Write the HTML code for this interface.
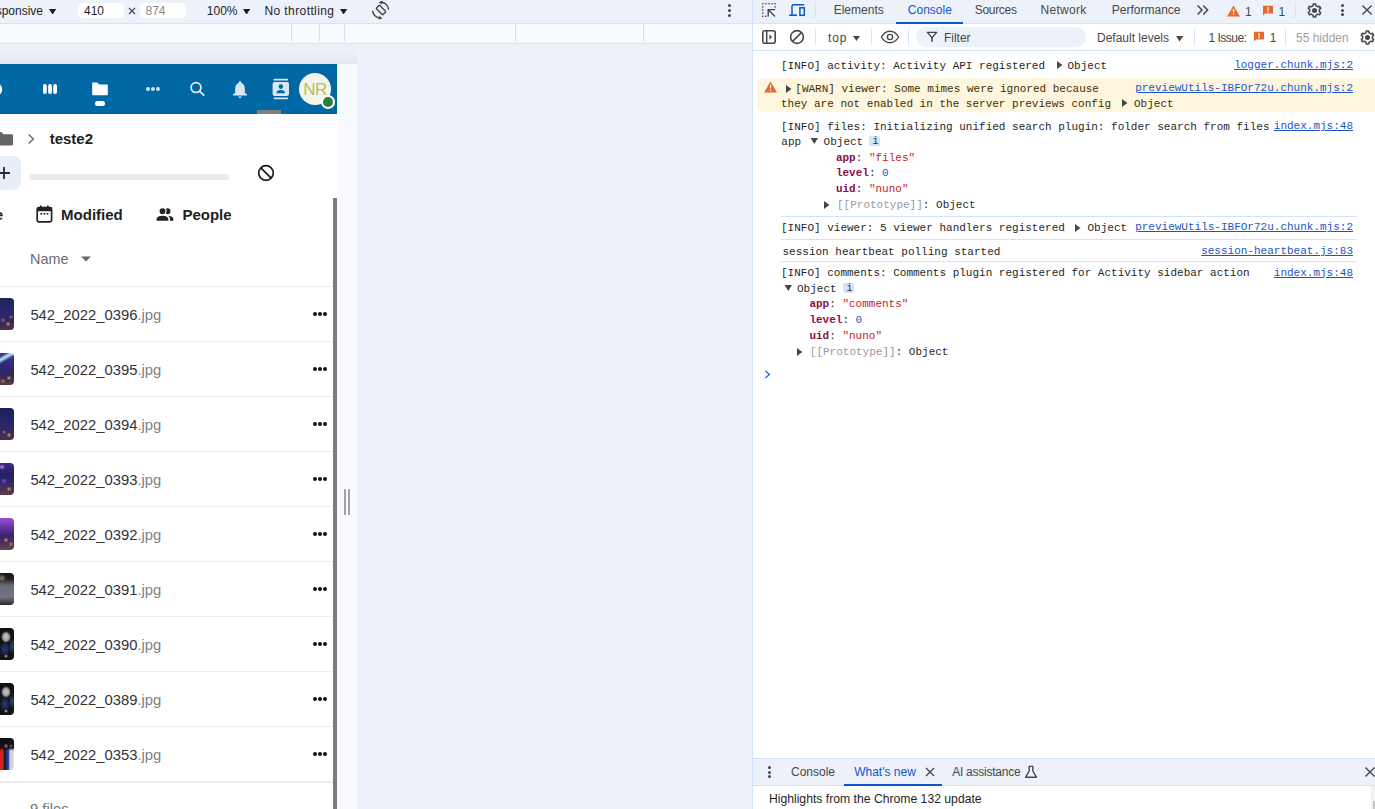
<!DOCTYPE html>
<html><head><meta charset="utf-8"><title>DevTools</title>
<style>
html,body{margin:0;padding:0;}
body{width:1375px;height:809px;overflow:hidden;position:relative;background:#edf2fa;font-family:'Liberation Sans', sans-serif;}
</style></head><body>
<div style="position:absolute;left:0px;top:0px;width:752px;height:23px;background:#edf2fa;"></div>
<div style="position:absolute;left:0px;top:23px;width:752px;height:1px;background:#d3e3fd;"></div>
<div style="position:absolute;left:0px;top:24px;width:752px;height:19px;background:#f8fafd;"></div>
<div style="position:absolute;left:291px;top:24px;width:1px;height:18px;background:#d3e3fd;"></div>
<div style="position:absolute;left:319px;top:24px;width:1px;height:18px;background:#d3e3fd;"></div>
<div style="position:absolute;left:344px;top:24px;width:1px;height:18px;background:#d3e3fd;"></div>
<div style="position:absolute;left:515px;top:24px;width:1px;height:18px;background:#d3e3fd;"></div>
<div style="position:absolute;left:643px;top:24px;width:1px;height:18px;background:#d3e3fd;"></div>
<div style="position:absolute;left:0px;top:43px;width:752px;height:1px;background:#d3e3fd;"></div>
<div style="position:absolute;right:1332px;top:3.84px;font:normal 12px/14px 'Liberation Sans', sans-serif;color:#1f1f1f;white-space:pre;">Responsive</div>
<svg style="position:absolute;left:49.2px;top:8.8px" width="7.2" height="5.6" viewBox="0 0 7.2 5.6"><path d="M0 0H7.2L3.6 5.6Z" fill="#1f1f1f"/></svg>
<div style="position:absolute;left:78px;top:3px;width:46px;height:15px;background:#fff;border-radius:4px"></div>
<div style="position:absolute;left:84px;top:3.84px;font:normal 12px/14px 'Liberation Sans', sans-serif;color:#1f1f1f;white-space:pre;">410</div>
<svg style="position:absolute;left:128px;top:7px" width="8" height="8" viewBox="0 0 8 8"><path d="M1 1L7 7M7 1L1 7" stroke="#474747" stroke-width="1.2"/></svg>
<div style="position:absolute;left:140px;top:3px;width:46px;height:15px;background:#fff;border-radius:4px"></div>
<div style="position:absolute;left:145.5px;top:3.84px;font:normal 12px/14px 'Liberation Sans', sans-serif;color:#8a8a8a;white-space:pre;">874</div>
<div style="position:absolute;left:206.8px;top:3.84px;font:normal 12px/14px 'Liberation Sans', sans-serif;color:#1f1f1f;white-space:pre;">100%</div>
<svg style="position:absolute;left:242.7px;top:8.8px" width="7.2" height="5.6" viewBox="0 0 7.2 5.6"><path d="M0 0H7.2L3.6 5.6Z" fill="#1f1f1f"/></svg>
<div style="position:absolute;left:264.5px;top:3.84px;font:normal 12px/14px 'Liberation Sans', sans-serif;color:#1f1f1f;white-space:pre;letter-spacing:0.4px">No throttling</div>
<svg style="position:absolute;left:340.4px;top:8.8px" width="7.2" height="5.6" viewBox="0 0 7.2 5.6"><path d="M0 0H7.2L3.6 5.6Z" fill="#1f1f1f"/></svg>
<svg style="position:absolute;left:366px;top:0px" width="30" height="22" viewBox="0 0 30 22"><g fill="none" stroke="#474747" stroke-width="1.4">
<rect x="12.6" y="5.3" width="4.8" height="9.4" rx="1" transform="rotate(-45 15 10)" />
<path d="M14.6 2.2 A8 8 0 0 1 22.6 9.6"/>
<path d="M6.6 10.6 A8 8 0 0 0 14.2 18.2"/>
</g>
<path d="M12.6 2.2 L16.6 0.6 L16 4.4Z" fill="#474747"/>
<path d="M16.6 18.4 L12.6 19.6 L13.2 15.8Z" fill="#474747"/></svg>
<div style="position:absolute;left:728.3px;top:3.5px;width:3px;height:3px;background:#474747;border-radius:50%"></div>
<div style="position:absolute;left:728.3px;top:8.5px;width:3px;height:3px;background:#474747;border-radius:50%"></div>
<div style="position:absolute;left:728.3px;top:13.5px;width:3px;height:3px;background:#474747;border-radius:50%"></div>
<div style="position:absolute;left:0px;top:44px;width:357px;height:20px;background:linear-gradient(180deg,rgba(20,30,70,0) 0%,rgba(20,30,70,0.045) 100%);border-radius:0 18px 0 0"></div>
<div style="position:absolute;left:0px;top:64px;width:337px;height:745px;background:#fff;"></div>
<div style="position:absolute;left:337px;top:64px;width:20px;height:745px;background:#f8fafd;"></div>
<div style="position:absolute;left:344px;top:489px;width:2px;height:26px;background:#a3a3a3;"></div>
<div style="position:absolute;left:348px;top:489px;width:2px;height:26px;background:#a3a3a3;"></div>
<div style="position:absolute;left:0px;top:64px;width:337px;height:50px;background:#0069a5;"></div>
<svg style="position:absolute;left:0px;top:82px" width="6" height="15" viewBox="0 0 6 15"><circle cx="-4.8" cy="7.4" r="7" fill="#fff"/></svg>
<svg style="position:absolute;left:42px;top:83px" width="16" height="12" viewBox="0 0 16 12"><rect x="1" y="1" width="3.8" height="10" rx="1.9" fill="#fff"/><rect x="6.1" y="1" width="3.8" height="10" rx="1.9" fill="#fff"/><rect x="11.2" y="1" width="3.8" height="10" rx="1.9" fill="#fff"/></svg>
<svg style="position:absolute;left:91px;top:82px" width="18" height="14" viewBox="0 0 18 14"><path d="M1.2 1.6c0-.6.4-1 1-1h4.2l1.8 2h7.6c.6 0 1 .4 1 1v8.6c0 .6-.4 1-1 1H2.2c-.6 0-1-.4-1-1z" fill="#fff"/></svg>
<div style="position:absolute;left:95px;top:101px;width:10px;height:5px;background:#fff;border-radius:2.5px"></div>
<div style="position:absolute;left:145.9px;top:87.2px;width:3.8px;height:3.8px;background:#cfe0ec;border-radius:50%"></div>
<div style="position:absolute;left:151.1px;top:87.2px;width:3.8px;height:3.8px;background:#cfe0ec;border-radius:50%"></div>
<div style="position:absolute;left:156.29999999999998px;top:87.2px;width:3.8px;height:3.8px;background:#cfe0ec;border-radius:50%"></div>
<svg style="position:absolute;left:189px;top:81px" width="17" height="16" viewBox="0 0 17 16"><circle cx="7" cy="6.6" r="4.9" fill="none" stroke="#e8f0f6" stroke-width="1.7"/><path d="M10.5 10.2 L15.2 14.6" stroke="#e8f0f6" stroke-width="1.8"/></svg>
<svg style="position:absolute;left:231px;top:80px" width="18" height="19" viewBox="0 0 18 19"><path d="M9 1.2c-.8 0-1.3.6-1.3 1.2v.5C5.5 3.6 4.2 5.6 4.2 8v4.8L2 14.6v.9h14v-.9l-2.2-1.8V8c0-2.4-1.3-4.4-3.5-5.1v-.5c0-.6-.5-1.2-1.3-1.2z" fill="#d9e7f1"/><path d="M7.4 16.4h3.2c0 .9-.7 1.5-1.6 1.5s-1.6-.6-1.6-1.5z" fill="#d9e7f1"/></svg>
<svg style="position:absolute;left:271px;top:78px" width="20" height="22" viewBox="0 0 20 22"><rect x="2.6" y="0.8" width="14.4" height="1.8" rx=".6" fill="#d9e7f1"/><rect x="2.6" y="19.4" width="14.4" height="1.8" rx=".6" fill="#d9e7f1"/><rect x="1.6" y="4" width="16.4" height="14" rx="2" fill="#d9e7f1"/><circle cx="9.8" cy="8.6" r="2.3" fill="#0069a5"/><path d="M5.4 15.2c0-2 2-3.2 4.4-3.2s4.4 1.2 4.4 3.2z" fill="#0069a5"/></svg>
<div style="position:absolute;left:299px;top:73px;width:32px;height:32px;background:#f4f5e9;border-radius:50%"></div>
<div style="position:absolute;left:299px;top:80.11px;font:normal 17px/20px 'Liberation Sans', sans-serif;color:#b7bf63;white-space:pre;width:32px;text-align:center;letter-spacing:-0.5px">NR</div>
<div style="position:absolute;left:321px;top:95px;width:14px;height:14px;background:#fff;border-radius:50%"></div>
<div style="position:absolute;left:323px;top:97px;width:10px;height:10px;background:#2d7d3a;border-radius:50%"></div>
<div style="position:absolute;left:257px;top:110px;width:24px;height:4px;background:#7f7f7f;"></div>
<svg style="position:absolute;left:-6px;top:131px" width="20" height="15" viewBox="0 0 20 15"><path d="M0 2.4c0-.8.6-1.4 1.4-1.4h6l2 2.2h8.2c.8 0 1.4.6 1.4 1.4v8.4c0 .8-.6 1.4-1.4 1.4H1.4C.6 14.4 0 13.8 0 13z" fill="#646464"/></svg>
<svg style="position:absolute;left:27px;top:133px" width="9" height="12" viewBox="0 0 9 12"><path d="M1.6 1.4 L6.4 6 L1.6 10.6" fill="none" stroke="#6a6a6a" stroke-width="1.4"/></svg>
<div style="position:absolute;left:49.7px;top:129.80px;font:bold 15px/18px 'Liberation Sans', sans-serif;color:#222;white-space:pre;">teste2</div>
<div style="position:absolute;left:-20px;top:156px;width:41px;height:34px;background:#e7eef5;border-radius:8px"></div>
<svg style="position:absolute;left:-2px;top:166px" width="14" height="14" viewBox="0 0 14 14"><path d="M6 1V13M0 7H12" stroke="#1c2f3e" stroke-width="1.8"/></svg>
<div style="position:absolute;left:29px;top:174px;width:200px;height:6px;background:#ebebeb;border-radius:3px"></div>
<svg style="position:absolute;left:257px;top:164px" width="18" height="18" viewBox="0 0 18 18"><circle cx="9" cy="9" r="7.3" fill="none" stroke="#1b1b1b" stroke-width="1.7"/><path d="M3.8 3.8 L14.2 14.2" stroke="#1b1b1b" stroke-width="1.7"/></svg>
<div style="position:absolute;right:1372px;top:206.10px;font:bold 15px/18px 'Liberation Sans', sans-serif;color:#222;white-space:pre;">Type</div>
<svg style="position:absolute;left:36px;top:205px" width="17" height="18" viewBox="0 0 17 18"><rect x="1.2" y="2.6" width="14.4" height="14.2" rx="1.6" fill="none" stroke="#222" stroke-width="1.7"/><rect x="4" y="0.6" width="1.7" height="3" fill="#222"/><rect x="11" y="0.6" width="1.7" height="3" fill="#222"/><rect x="1.2" y="2.6" width="14.4" height="3.6" fill="#222"/><rect x="4.4" y="8" width="1.8" height="1.6" fill="#222"/><rect x="7.5" y="8" width="1.8" height="1.6" fill="#222"/><rect x="10.6" y="8" width="1.8" height="1.6" fill="#222"/></svg>
<div style="position:absolute;left:61.1px;top:206.10px;font:bold 15px/18px 'Liberation Sans', sans-serif;color:#222;white-space:pre;">Modified</div>
<svg style="position:absolute;left:154.9px;top:204.8px" width="20.04" height="20.04" viewBox="0 0 24 24"><path d="M16 17V19H2V17S2 13 9 13 16 17 16 17M12.5 7.5A3.5 3.5 0 1 0 9 11A3.5 3.5 0 0 0 12.5 7.5M15.94 13A5.32 5.32 0 0 1 18 17V19H22V17S22 13.37 15.94 13M15 4A3.39 3.39 0 0 0 13.07 4.59A5 5 0 0 1 13.07 10.41A3.39 3.39 0 0 0 15 11A3.5 3.5 0 0 0 15 4Z" fill="#222"/></svg>
<div style="position:absolute;left:182.4px;top:206.10px;font:bold 15px/18px 'Liberation Sans', sans-serif;color:#222;white-space:pre;">People</div>
<div style="position:absolute;left:30px;top:250.51px;font:normal 14.4px/17px 'Liberation Sans', sans-serif;color:#6b6b6b;white-space:pre;">Name</div>
<svg style="position:absolute;left:81px;top:256px" width="10" height="6" viewBox="0 0 10 6"><path d="M0 0.4H10L5 5.6Z" fill="#6b6b6b"/></svg>
<div style="position:absolute;left:0px;top:286px;width:333px;height:1px;background:#ededed;"></div>
<div style="position:absolute;left:0px;top:298px;width:14px;height:32px;background:radial-gradient(circle at 8px 26px,#e0a040 0,transparent 2.5px),radial-gradient(circle at 3px 22px,#9a60c0 0,transparent 2.5px),radial-gradient(circle at 11px 19px,#c08050 0,transparent 2px),linear-gradient(180deg,#22225a 0%,#2a2670 45%,#34285e 70%,#4a3048 100%);border-radius:0 4px 4px 0"></div>
<div style="position:absolute;left:30.4px;top:305.87px;font:normal 14.8px/18px 'Liberation Sans', sans-serif;color:#333;white-space:pre;">542_2022_0396<span style="color:#808080">.jpg</span></div>
<div style="position:absolute;left:313px;top:312px;width:4px;height:4px;background:#111;border-radius:50%"></div>
<div style="position:absolute;left:318px;top:312px;width:4px;height:4px;background:#111;border-radius:50%"></div>
<div style="position:absolute;left:323px;top:312px;width:4px;height:4px;background:#111;border-radius:50%"></div>
<div style="position:absolute;left:0px;top:341px;width:333px;height:1px;background:#ededed;"></div>
<div style="position:absolute;left:0px;top:353px;width:14px;height:32px;background:linear-gradient(150deg,transparent 8%,#b8f0ff 18%,transparent 28%),radial-gradient(circle at 9px 25px,#e0a040 0,transparent 2.5px),radial-gradient(circle at 3px 28px,#c07040 0,transparent 2.5px),linear-gradient(180deg,#3a3498 0%,#2e2878 40%,#30265e 70%,#5a3e44 100%);border-radius:0 4px 4px 0"></div>
<div style="position:absolute;left:30.4px;top:360.87px;font:normal 14.8px/18px 'Liberation Sans', sans-serif;color:#333;white-space:pre;">542_2022_0395<span style="color:#808080">.jpg</span></div>
<div style="position:absolute;left:313px;top:367px;width:4px;height:4px;background:#111;border-radius:50%"></div>
<div style="position:absolute;left:318px;top:367px;width:4px;height:4px;background:#111;border-radius:50%"></div>
<div style="position:absolute;left:323px;top:367px;width:4px;height:4px;background:#111;border-radius:50%"></div>
<div style="position:absolute;left:0px;top:396px;width:333px;height:1px;background:#ededed;"></div>
<div style="position:absolute;left:0px;top:408px;width:14px;height:32px;background:radial-gradient(circle at 9px 27px,#e0a040 0,transparent 2.5px),radial-gradient(circle at 4px 24px,#a070c0 0,transparent 2px),linear-gradient(180deg,#1e1e55 0%,#28266a 45%,#34285e 70%,#4a3048 100%);border-radius:0 4px 4px 0"></div>
<div style="position:absolute;left:30.4px;top:415.87px;font:normal 14.8px/18px 'Liberation Sans', sans-serif;color:#333;white-space:pre;">542_2022_0394<span style="color:#808080">.jpg</span></div>
<div style="position:absolute;left:313px;top:422px;width:4px;height:4px;background:#111;border-radius:50%"></div>
<div style="position:absolute;left:318px;top:422px;width:4px;height:4px;background:#111;border-radius:50%"></div>
<div style="position:absolute;left:323px;top:422px;width:4px;height:4px;background:#111;border-radius:50%"></div>
<div style="position:absolute;left:0px;top:451px;width:333px;height:1px;background:#ededed;"></div>
<div style="position:absolute;left:0px;top:463px;width:14px;height:32px;background:radial-gradient(circle at 2px 4px,#d080ff 0,transparent 3px),radial-gradient(circle at 9px 26px,#e0a040 0,transparent 2.5px),radial-gradient(circle at 4px 18px,#8050d0 0,transparent 3px),linear-gradient(180deg,#3a2a88 0%,#22205e 35%,#30246e 60%,#5a3e48 100%);border-radius:0 4px 4px 0"></div>
<div style="position:absolute;left:30.4px;top:470.87px;font:normal 14.8px/18px 'Liberation Sans', sans-serif;color:#333;white-space:pre;">542_2022_0393<span style="color:#808080">.jpg</span></div>
<div style="position:absolute;left:313px;top:477px;width:4px;height:4px;background:#111;border-radius:50%"></div>
<div style="position:absolute;left:318px;top:477px;width:4px;height:4px;background:#111;border-radius:50%"></div>
<div style="position:absolute;left:323px;top:477px;width:4px;height:4px;background:#111;border-radius:50%"></div>
<div style="position:absolute;left:0px;top:506px;width:333px;height:1px;background:#ededed;"></div>
<div style="position:absolute;left:0px;top:518px;width:14px;height:32px;background:radial-gradient(circle at 6px 22px,#e0a040 0,transparent 2.5px),radial-gradient(circle at 11px 26px,#c08040 0,transparent 2.5px),linear-gradient(180deg,#9a50d0 0%,#6a3aa8 25%,#3a2470 55%,#4a3060 80%,#6a4a40 100%);border-radius:0 4px 4px 0"></div>
<div style="position:absolute;left:30.4px;top:525.87px;font:normal 14.8px/18px 'Liberation Sans', sans-serif;color:#333;white-space:pre;">542_2022_0392<span style="color:#808080">.jpg</span></div>
<div style="position:absolute;left:313px;top:532px;width:4px;height:4px;background:#111;border-radius:50%"></div>
<div style="position:absolute;left:318px;top:532px;width:4px;height:4px;background:#111;border-radius:50%"></div>
<div style="position:absolute;left:323px;top:532px;width:4px;height:4px;background:#111;border-radius:50%"></div>
<div style="position:absolute;left:0px;top:561px;width:333px;height:1px;background:#ededed;"></div>
<div style="position:absolute;left:0px;top:573px;width:14px;height:32px;background:radial-gradient(circle at 2px 5px,#9a8070 0,transparent 4px),linear-gradient(180deg,#18181c 0%,#202024 18%,#6a6a78 38%,#747482 75%,#2a2a30 100%);border-radius:0 4px 4px 0"></div>
<div style="position:absolute;left:30.4px;top:580.87px;font:normal 14.8px/18px 'Liberation Sans', sans-serif;color:#333;white-space:pre;">542_2022_0391<span style="color:#808080">.jpg</span></div>
<div style="position:absolute;left:313px;top:587px;width:4px;height:4px;background:#111;border-radius:50%"></div>
<div style="position:absolute;left:318px;top:587px;width:4px;height:4px;background:#111;border-radius:50%"></div>
<div style="position:absolute;left:323px;top:587px;width:4px;height:4px;background:#111;border-radius:50%"></div>
<div style="position:absolute;left:0px;top:616px;width:333px;height:1px;background:#ededed;"></div>
<div style="position:absolute;left:0px;top:628px;width:14px;height:32px;background:radial-gradient(ellipse 5px 6px at 6px 9px,#c8c8c8 0,#a0a0a0 60%,transparent 100%),radial-gradient(ellipse 5px 7px at 5px 21px,#2a3a68 0,#1a2448 70%,transparent 100%),radial-gradient(circle at 6px 28px,#d0d0d0 0,transparent 2px),radial-gradient(ellipse 3px 8px at 12px 18px,#3a4a80 0,transparent 100%),linear-gradient(180deg,#101014 0%,#141418 100%);border-radius:0 4px 4px 0"></div>
<div style="position:absolute;left:30.4px;top:635.87px;font:normal 14.8px/18px 'Liberation Sans', sans-serif;color:#333;white-space:pre;">542_2022_0390<span style="color:#808080">.jpg</span></div>
<div style="position:absolute;left:313px;top:642px;width:4px;height:4px;background:#111;border-radius:50%"></div>
<div style="position:absolute;left:318px;top:642px;width:4px;height:4px;background:#111;border-radius:50%"></div>
<div style="position:absolute;left:323px;top:642px;width:4px;height:4px;background:#111;border-radius:50%"></div>
<div style="position:absolute;left:0px;top:671px;width:333px;height:1px;background:#ededed;"></div>
<div style="position:absolute;left:0px;top:683px;width:14px;height:32px;background:radial-gradient(ellipse 5px 6px at 6px 9px,#c8c8c8 0,#a0a0a0 60%,transparent 100%),radial-gradient(ellipse 5px 7px at 5px 21px,#2a3a68 0,#1a2448 70%,transparent 100%),radial-gradient(circle at 6px 28px,#d0d0d0 0,transparent 2px),radial-gradient(ellipse 3px 8px at 12px 18px,#3a4a80 0,transparent 100%),linear-gradient(180deg,#101014 0%,#141418 100%);border-radius:0 4px 4px 0"></div>
<div style="position:absolute;left:30.4px;top:690.87px;font:normal 14.8px/18px 'Liberation Sans', sans-serif;color:#333;white-space:pre;">542_2022_0389<span style="color:#808080">.jpg</span></div>
<div style="position:absolute;left:313px;top:697px;width:4px;height:4px;background:#111;border-radius:50%"></div>
<div style="position:absolute;left:318px;top:697px;width:4px;height:4px;background:#111;border-radius:50%"></div>
<div style="position:absolute;left:323px;top:697px;width:4px;height:4px;background:#111;border-radius:50%"></div>
<div style="position:absolute;left:0px;top:726px;width:333px;height:1px;background:#ededed;"></div>
<div style="position:absolute;left:0px;top:738px;width:14px;height:32px;background:radial-gradient(circle at 6px 8px,#b08070 0,transparent 2.5px),radial-gradient(circle at 11px 8px,#a07060 0,transparent 2px),linear-gradient(180deg,#101014 0%,#101014 30%,transparent 40%),linear-gradient(90deg,#d82020 0%,#d02020 22%,#181818 32%,#202a80 45%,#2840a0 60%,#c8c8d0 70%,#e0e0e8 100%);border-radius:0 4px 4px 0"></div>
<div style="position:absolute;left:30.4px;top:745.87px;font:normal 14.8px/18px 'Liberation Sans', sans-serif;color:#333;white-space:pre;">542_2022_0353<span style="color:#808080">.jpg</span></div>
<div style="position:absolute;left:313px;top:752px;width:4px;height:4px;background:#111;border-radius:50%"></div>
<div style="position:absolute;left:318px;top:752px;width:4px;height:4px;background:#111;border-radius:50%"></div>
<div style="position:absolute;left:323px;top:752px;width:4px;height:4px;background:#111;border-radius:50%"></div>
<div style="position:absolute;left:0px;top:781px;width:333px;height:2px;background:#ededed;"></div>
<div style="position:absolute;left:30px;top:800.37px;font:normal 14.8px/18px 'Liberation Sans', sans-serif;color:#767676;white-space:pre;">9 files</div>
<div style="position:absolute;left:333px;top:198px;width:4px;height:611px;background:#7c7c7c;"></div>
<div style="position:absolute;left:752px;top:0px;width:1px;height:809px;background:#d3e3fd;"></div>
<div style="position:absolute;left:753px;top:0px;width:622px;height:23px;background:#edf2fa;"></div>
<div style="position:absolute;left:753px;top:23px;width:622px;height:1px;background:#d3e3fd;"></div>
<svg style="position:absolute;left:760px;top:1px" width="20" height="20" viewBox="0 0 20 20"><g fill="#474747">
<rect x="2" y="2" width="1.4" height="1.4"/><rect x="5.1" y="2" width="1.4" height="1.4"/><rect x="8.3" y="2" width="1.4" height="1.4"/><rect x="11.5" y="2" width="1.4" height="1.4"/><rect x="14.4" y="2" width="1.4" height="1.4"/>
<rect x="2" y="5.2" width="1.4" height="1.4"/><rect x="2" y="8.3" width="1.4" height="1.4"/><rect x="2" y="11.5" width="1.4" height="1.4"/><rect x="2" y="14.6" width="1.4" height="1.4"/>
<rect x="14.4" y="5.2" width="1.4" height="1.4"/><rect x="5.1" y="14.6" width="1.4" height="1.4"/>
</g>
<path d="M8.2 15.6V8.6H15.2M8.6 9L15 15.4" fill="none" stroke="#474747" stroke-width="1.4"/></svg>
<svg style="position:absolute;left:786px;top:2px" width="22" height="16" viewBox="0 0 22 16"><path d="M6 13.1V4.2C6 3.4 6.5 2.8 7.3 2.8H18.2" fill="none" stroke="#0b57d0" stroke-width="1.5"/>
<rect x="3.2" y="12.4" width="7.8" height="1.6" fill="#0b57d0"/>
<rect x="13.9" y="5.8" width="4.4" height="7.5" fill="none" stroke="#0b57d0" stroke-width="1.5"/></svg>
<div style="position:absolute;left:815px;top:2px;width:1px;height:16px;background:#d3e3fd;"></div>
<div style="position:absolute;left:833.7px;top:3.14px;font:normal 12px/14px 'Liberation Sans', sans-serif;color:#474747;white-space:pre;">Elements</div>
<div style="position:absolute;left:907.8px;top:3.14px;font:normal 12px/14px 'Liberation Sans', sans-serif;color:#0b57d0;white-space:pre;">Console</div>
<div style="position:absolute;left:896px;top:22px;width:67px;height:2px;background:#0b57d0;"></div>
<div style="position:absolute;left:974.7px;top:3.14px;font:normal 12px/14px 'Liberation Sans', sans-serif;color:#474747;white-space:pre;letter-spacing:-0.3px">Sources</div>
<div style="position:absolute;left:1040.5px;top:3.14px;font:normal 12px/14px 'Liberation Sans', sans-serif;color:#474747;white-space:pre;letter-spacing:0.3px">Network</div>
<div style="position:absolute;left:1111.8px;top:3.14px;font:normal 12px/14px 'Liberation Sans', sans-serif;color:#474747;white-space:pre;">Performance</div>
<svg style="position:absolute;left:1196px;top:4px" width="14" height="12" viewBox="0 0 14 12"><path d="M1.6 1.4L6 6L1.6 10.6M7.2 1.4L11.6 6L7.2 10.6" fill="none" stroke="#474747" stroke-width="1.5"/></svg>
<svg style="position:absolute;left:1227px;top:5px" width="14" height="12" viewBox="0 0 14 12"><path d="M6.5 0.6L13 11.4H0z" fill="#e8692b"/><rect x="5.9" y="3.8" width="1.3" height="3.6" fill="#fff"/><rect x="5.9" y="8.4" width="1.3" height="1.4" fill="#fff"/></svg>
<div style="position:absolute;left:1245px;top:4.64px;font:normal 12px/14px 'Liberation Sans', sans-serif;color:#474747;white-space:pre;">1</div>
<svg style="position:absolute;left:1262px;top:5px" width="12" height="12" viewBox="0 0 12 12"><path d="M1 0.8H11V8.4H3.2L1 10.6z" fill="#e8692b"/><rect x="5.4" y="2.2" width="1.3" height="3.4" fill="#fff"/><rect x="5.4" y="6.2" width="1.3" height="1.3" fill="#fff"/></svg>
<div style="position:absolute;left:1278.4px;top:4.64px;font:normal 12px/14px 'Liberation Sans', sans-serif;color:#474747;white-space:pre;">1</div>
<div style="position:absolute;left:1295px;top:2px;width:1px;height:16px;background:#d3e3fd;"></div>
<svg style="position:absolute;left:1306.5px;top:2.5px" width="15" height="15" viewBox="0 0 15 15"><path d="M8.89 2.70 L8.74 1.02 L6.26 1.02 L6.11 2.70 L4.04 3.89 L2.50 3.19 L1.27 5.33 L2.64 6.31 L2.64 8.69 L1.27 9.67 L2.50 11.81 L4.04 11.11 L6.11 12.30 L6.26 13.98 L8.74 13.98 L8.89 12.30 L10.96 11.11 L12.50 11.81 L13.73 9.67 L12.36 8.69 L12.36 6.31 L13.73 5.33 L12.50 3.19 L10.96 3.89Z" fill="none" stroke="#474747" stroke-width="1.5" stroke-linejoin="round"/><circle cx="7.5" cy="7.5" r="2.5" fill="#474747"/></svg>
<div style="position:absolute;left:1340.5px;top:3.7px;width:3px;height:3px;background:#474747;border-radius:50%"></div>
<div style="position:absolute;left:1340.5px;top:8.5px;width:3px;height:3px;background:#474747;border-radius:50%"></div>
<div style="position:absolute;left:1340.5px;top:13.3px;width:3px;height:3px;background:#474747;border-radius:50%"></div>
<svg style="position:absolute;left:1361px;top:4px" width="12" height="12" viewBox="0 0 12 12"><path d="M1.4 1.4L10.6 10.6M10.6 1.4L1.4 10.6" stroke="#474747" stroke-width="1.4"/></svg>
<div style="position:absolute;left:753px;top:24px;width:622px;height:26px;background:#fff;"></div>
<div style="position:absolute;left:753px;top:50px;width:622px;height:1px;background:#d3e3fd;"></div>
<svg style="position:absolute;left:761px;top:29px" width="16" height="16" viewBox="0 0 16 16"><rect x="1.8" y="1.8" width="12.4" height="12.4" rx="2" fill="none" stroke="#474747" stroke-width="1.6"/><path d="M5.7 1.6V14.4" stroke="#474747" stroke-width="1.5"/><path d="M8.4 5.2L11 8L8.4 10.8z" fill="#474747"/></svg>
<svg style="position:absolute;left:789px;top:29px" width="16" height="16" viewBox="0 0 16 16"><circle cx="8" cy="8" r="6.4" fill="none" stroke="#474747" stroke-width="1.6"/><path d="M3.6 12.4L12.4 3.6" stroke="#474747" stroke-width="1.5"/></svg>
<div style="position:absolute;left:815px;top:29px;width:1px;height:16px;background:#d3e3fd;"></div>
<div style="position:absolute;left:828px;top:30.84px;font:normal 12px/14px 'Liberation Sans', sans-serif;color:#474747;white-space:pre;letter-spacing:0.9px">top</div>
<svg style="position:absolute;left:852.7px;top:35.5px" width="7" height="5" viewBox="0 0 7 5"><path d="M0 0H7L3.5 5Z" fill="#474747"/></svg>
<div style="position:absolute;left:871px;top:29px;width:1px;height:16px;background:#d3e3fd;"></div>
<svg style="position:absolute;left:880px;top:30px" width="20" height="14" viewBox="0 0 20 14"><path d="M1.4 7C3.6 3.2 6.6 1.2 10 1.2S16.4 3.2 18.6 7C16.4 10.8 13.4 12.8 10 12.8S3.6 10.8 1.4 7z" fill="none" stroke="#474747" stroke-width="1.4"/><circle cx="10" cy="7" r="2.6" fill="none" stroke="#474747" stroke-width="1.4"/></svg>
<div style="position:absolute;left:908px;top:29px;width:1px;height:16px;background:#d3e3fd;"></div>
<div style="position:absolute;left:916px;top:27px;width:170px;height:20px;background:#edf2fa;border-radius:10px"></div>
<svg style="position:absolute;left:926px;top:31px" width="12" height="12" viewBox="0 0 12 12"><path d="M1.4 1.4H10.6L6 6.6z" fill="none" stroke="#474747" stroke-width="1.4" stroke-linejoin="round"/><rect x="5.3" y="6.2" width="1.5" height="4.6" fill="#474747"/></svg>
<div style="position:absolute;left:943.9px;top:30.84px;font:normal 12px/14px 'Liberation Sans', sans-serif;color:#474747;white-space:pre;">Filter</div>
<div style="position:absolute;left:1097px;top:30.84px;font:normal 12px/14px 'Liberation Sans', sans-serif;color:#474747;white-space:pre;">Default levels</div>
<svg style="position:absolute;left:1175.5px;top:36px" width="7.2" height="5.6" viewBox="0 0 7.2 5.6"><path d="M0 0H7.2L3.6 5.6Z" fill="#474747"/></svg>
<div style="position:absolute;left:1194px;top:29px;width:1px;height:16px;background:#d3e3fd;"></div>
<div style="position:absolute;left:1208.5px;top:30.84px;font:normal 12px/14px 'Liberation Sans', sans-serif;color:#474747;white-space:pre;letter-spacing:-0.5px">1 Issue:</div>
<svg style="position:absolute;left:1253px;top:31px" width="12" height="12" viewBox="0 0 12 12"><path d="M1 0.8H11V8.4H3.2L1 10.6z" fill="#e8692b"/><rect x="5.4" y="2.2" width="1.3" height="3.4" fill="#fff"/><rect x="5.4" y="6.2" width="1.3" height="1.3" fill="#fff"/></svg>
<div style="position:absolute;left:1269.7px;top:30.84px;font:normal 12px/14px 'Liberation Sans', sans-serif;color:#474747;white-space:pre;">1</div>
<div style="position:absolute;left:1285px;top:29px;width:1px;height:16px;background:#d3e3fd;"></div>
<div style="position:absolute;left:1296px;top:30.84px;font:normal 12px/14px 'Liberation Sans', sans-serif;color:#9e9e9e;white-space:pre;">55 hidden</div>
<svg style="position:absolute;left:1359.5px;top:29.5px" width="15" height="15" viewBox="0 0 15 15"><path d="M8.89 2.70 L8.74 1.02 L6.26 1.02 L6.11 2.70 L4.04 3.89 L2.50 3.19 L1.27 5.33 L2.64 6.31 L2.64 8.69 L1.27 9.67 L2.50 11.81 L4.04 11.11 L6.11 12.30 L6.26 13.98 L8.74 13.98 L8.89 12.30 L10.96 11.11 L12.50 11.81 L13.73 9.67 L12.36 8.69 L12.36 6.31 L13.73 5.33 L12.50 3.19 L10.96 3.89Z" fill="none" stroke="#474747" stroke-width="1.5" stroke-linejoin="round"/><circle cx="7.5" cy="7.5" r="2.5" fill="#474747"/></svg>
<div style="position:absolute;left:753px;top:51px;width:622px;height:707px;background:#fff;"></div>
<div style="position:absolute;left:781px;top:59.57px;font:normal 11px/13px 'Liberation Mono', monospace;color:#1f1f1f;white-space:pre;">[INFO] activity: Activity API registered </div>
<svg style="position:absolute;left:1056px;top:60px" width="8" height="10" viewBox="0 0 8 10"><path d="M1 1L6.4 5L1 9z" fill="#474747"/></svg>
<div style="position:absolute;left:1067.5px;top:59.57px;font:normal 11px/13px 'Liberation Mono', monospace;color:#1f1f1f;white-space:pre;">Object</div>
<div style="position:absolute;right:22px;top:58.87px;font:normal 11px/13px 'Liberation Mono', monospace;color:#1a55c6;white-space:pre;text-decoration:underline">logger.chunk.mjs:2</div>
<div style="position:absolute;left:757px;top:78px;width:630px;height:34px;background:#fef6de;border-radius:6px"></div>
<svg style="position:absolute;left:764px;top:81px" width="14" height="12" viewBox="0 0 14 12"><path d="M6.5 0.6L13 11.4H0z" fill="#e8692b"/><rect x="5.9" y="3.8" width="1.3" height="3.6" fill="#fff"/><rect x="5.9" y="8.4" width="1.3" height="1.4" fill="#fff"/></svg>
<svg style="position:absolute;left:785px;top:83.6px" width="8" height="10" viewBox="0 0 8 10"><path d="M1 1L6.4 5L1 9z" fill="#474747"/></svg>
<div style="position:absolute;left:795.3px;top:82.97px;font:normal 11px/13px 'Liberation Mono', monospace;color:#422d00;white-space:pre;">[WARN] viewer: Some mimes were ignored because</div>
<div style="position:absolute;left:781px;top:97.57px;font:normal 11px/13px 'Liberation Mono', monospace;color:#422d00;white-space:pre;">they are not enabled in the server previews config </div>
<svg style="position:absolute;left:1121px;top:98px" width="8" height="10" viewBox="0 0 8 10"><path d="M1 1L6.4 5L1 9z" fill="#474747"/></svg>
<div style="position:absolute;left:1134px;top:97.57px;font:normal 11px/13px 'Liberation Mono', monospace;color:#422d00;white-space:pre;">Object</div>
<div style="position:absolute;right:22px;top:82.27px;font:normal 11px/13px 'Liberation Mono', monospace;color:#1a55c6;white-space:pre;text-decoration:underline">previewUtils-IBFOr72u.chunk.mjs:2</div>
<div style="position:absolute;left:781px;top:120.77px;font:normal 11px/13px 'Liberation Mono', monospace;color:#1f1f1f;white-space:pre;">[INFO] files: Initializing unified search plugin: folder search from files</div>
<div style="position:absolute;right:22px;top:120.07px;font:normal 11px/13px 'Liberation Mono', monospace;color:#1a55c6;white-space:pre;text-decoration:underline">index.mjs:48</div>
<div style="position:absolute;left:781.3px;top:136.17px;font:normal 11px/13px 'Liberation Mono', monospace;color:#1f1f1f;white-space:pre;">app </div>
<svg style="position:absolute;left:810px;top:137px" width="9" height="8" viewBox="0 0 9 8"><path d="M0.6 1H8L4.3 7z" fill="#474747"/></svg>
<div style="position:absolute;left:823.6px;top:136.17px;font:normal 11px/13px 'Liberation Mono', monospace;color:#1f1f1f;white-space:pre;">Object</div>
<div style="position:absolute;left:869px;top:136px;width:11px;height:10px;background:#d3e3fd;border-radius:2px"></div>
<div style="position:absolute;left:872.5px;top:136.34px;font:normal 10px/12px 'Liberation Mono', monospace;color:#303030;white-space:pre;">i</div>
<div style="position:absolute;left:835.9px;top:151.57px;font:normal 11px/13px 'Liberation Mono', monospace;color:#1f1f1f;white-space:pre;"><b style="color:#8b0f4a">app</b>: <span style="color:#c5221f">"files"</span></div>
<div style="position:absolute;left:835.9px;top:167.47px;font:normal 11px/13px 'Liberation Mono', monospace;color:#1f1f1f;white-space:pre;"><b style="color:#8b0f4a">level</b>: <span style="color:#1a55c6">0</span></div>
<div style="position:absolute;left:835.9px;top:183.27px;font:normal 11px/13px 'Liberation Mono', monospace;color:#1f1f1f;white-space:pre;"><b style="color:#8b0f4a">uid</b>: <span style="color:#c5221f">"nuno"</span></div>
<svg style="position:absolute;left:823px;top:200px" width="8" height="10" viewBox="0 0 8 10"><path d="M1 1L6.4 5L1 9z" fill="#474747"/></svg>
<div style="position:absolute;left:837px;top:199.47px;font:normal 11px/13px 'Liberation Mono', monospace;color:#1f1f1f;white-space:pre;"><span style="color:#9a9a9a">[[Prototype]]</span>: Object</div>
<div style="position:absolute;left:781px;top:216px;width:576px;height:1px;background:#d3e3fd;"></div>
<div style="position:absolute;left:781px;top:222.17px;font:normal 11px/13px 'Liberation Mono', monospace;color:#1f1f1f;white-space:pre;">[INFO] viewer: 5 viewer handlers registered </div>
<svg style="position:absolute;left:1074px;top:223px" width="8" height="10" viewBox="0 0 8 10"><path d="M1 1L6.4 5L1 9z" fill="#474747"/></svg>
<div style="position:absolute;left:1087.5px;top:222.17px;font:normal 11px/13px 'Liberation Mono', monospace;color:#1f1f1f;white-space:pre;">Object</div>
<div style="position:absolute;right:22px;top:221.47px;font:normal 11px/13px 'Liberation Mono', monospace;color:#1a55c6;white-space:pre;text-decoration:underline">previewUtils-IBFOr72u.chunk.mjs:2</div>
<div style="position:absolute;left:781px;top:239px;width:576px;height:1px;background:#d3e3fd;"></div>
<div style="position:absolute;left:782.5px;top:245.97px;font:normal 11px/13px 'Liberation Mono', monospace;color:#1f1f1f;white-space:pre;">session heartbeat polling started</div>
<div style="position:absolute;right:22px;top:245.27px;font:normal 11px/13px 'Liberation Mono', monospace;color:#1a55c6;white-space:pre;text-decoration:underline">session-heartbeat.js:83</div>
<div style="position:absolute;left:781px;top:261px;width:576px;height:1px;background:#d3e3fd;"></div>
<div style="position:absolute;left:781px;top:267.27px;font:normal 11px/13px 'Liberation Mono', monospace;color:#1f1f1f;white-space:pre;">[INFO] comments: Comments plugin registered for Activity sidebar action</div>
<div style="position:absolute;right:22px;top:266.57px;font:normal 11px/13px 'Liberation Mono', monospace;color:#1a55c6;white-space:pre;text-decoration:underline">index.mjs:48</div>
<svg style="position:absolute;left:784px;top:284px" width="9" height="8" viewBox="0 0 9 8"><path d="M0.6 1H8L4.3 7z" fill="#474747"/></svg>
<div style="position:absolute;left:797px;top:282.57px;font:normal 11px/13px 'Liberation Mono', monospace;color:#1f1f1f;white-space:pre;">Object</div>
<div style="position:absolute;left:843px;top:283px;width:11px;height:10px;background:#d3e3fd;border-radius:2px"></div>
<div style="position:absolute;left:846.5px;top:282.74px;font:normal 10px/12px 'Liberation Mono', monospace;color:#303030;white-space:pre;">i</div>
<div style="position:absolute;left:809.4px;top:298.37px;font:normal 11px/13px 'Liberation Mono', monospace;color:#1f1f1f;white-space:pre;"><b style="color:#8b0f4a">app</b>: <span style="color:#c5221f">"comments"</span></div>
<div style="position:absolute;left:809.4px;top:314.17px;font:normal 11px/13px 'Liberation Mono', monospace;color:#1f1f1f;white-space:pre;"><b style="color:#8b0f4a">level</b>: <span style="color:#1a55c6">0</span></div>
<div style="position:absolute;left:809.4px;top:329.97px;font:normal 11px/13px 'Liberation Mono', monospace;color:#1f1f1f;white-space:pre;"><b style="color:#8b0f4a">uid</b>: <span style="color:#c5221f">"nuno"</span></div>
<svg style="position:absolute;left:796px;top:347px" width="8" height="10" viewBox="0 0 8 10"><path d="M1 1L6.4 5L1 9z" fill="#474747"/></svg>
<div style="position:absolute;left:809.8px;top:346.37px;font:normal 11px/13px 'Liberation Mono', monospace;color:#1f1f1f;white-space:pre;"><span style="color:#9a9a9a">[[Prototype]]</span>: Object</div>
<svg style="position:absolute;left:763px;top:369px" width="9" height="11" viewBox="0 0 9 11"><path d="M2.4 1.8L6.4 5.4L2.4 9" fill="none" stroke="#1a73e8" stroke-width="1.4"/></svg>
<div style="position:absolute;left:753px;top:758px;width:622px;height:1px;background:#d3e3fd;"></div>
<div style="position:absolute;left:753px;top:759px;width:622px;height:26px;background:#edf2fa;"></div>
<div style="position:absolute;left:753px;top:785px;width:622px;height:1px;background:#d3e3fd;"></div>
<div style="position:absolute;left:767.5px;top:766.1px;width:3px;height:3px;background:#474747;border-radius:50%"></div>
<div style="position:absolute;left:767.5px;top:770.5px;width:3px;height:3px;background:#474747;border-radius:50%"></div>
<div style="position:absolute;left:767.5px;top:774.9px;width:3px;height:3px;background:#474747;border-radius:50%"></div>
<div style="position:absolute;left:791px;top:764.84px;font:normal 12px/14px 'Liberation Sans', sans-serif;color:#474747;white-space:pre;">Console</div>
<div style="position:absolute;left:854.2px;top:764.84px;font:normal 12px/14px 'Liberation Sans', sans-serif;color:#0b57d0;white-space:pre;">What's new</div>
<svg style="position:absolute;left:925px;top:767px" width="10" height="10" viewBox="0 0 10 10"><path d="M1 1L9 9M9 1L1 9" stroke="#474747" stroke-width="1.3"/></svg>
<div style="position:absolute;left:844px;top:783.5px;width:98px;height:2.5px;background:#0b57d0;"></div>
<div style="position:absolute;left:952.2px;top:764.84px;font:normal 12px/14px 'Liberation Sans', sans-serif;color:#474747;white-space:pre;letter-spacing:-0.25px">AI assistance</div>
<svg style="position:absolute;left:1024px;top:765px" width="14" height="14" viewBox="0 0 14 14"><path d="M4.6 1.4H9.4M5.2 1.4V6L1.6 12.2H12.4L8.8 6V1.4" fill="none" stroke="#474747" stroke-width="1.4" stroke-linejoin="round"/></svg>
<svg style="position:absolute;left:1364px;top:766px" width="12" height="12" viewBox="0 0 12 12"><path d="M1.4 1.4L10.6 10.6M10.6 1.4L1.4 10.6" stroke="#474747" stroke-width="1.4"/></svg>
<div style="position:absolute;left:753px;top:786px;width:622px;height:23px;background:#fff;"></div>
<div style="position:absolute;left:768.9px;top:792.47px;font:normal 12.2px/15px 'Liberation Sans', sans-serif;color:#1f1f1f;white-space:pre;">Highlights from the Chrome 132 update</div>
<div style="position:absolute;left:1371px;top:786px;width:4px;height:23px;background:#f2f2f2;"></div>
<div style="position:absolute;left:1373px;top:801px;width:2px;height:8px;background:#c4c4c4;"></div>
</body></html>
